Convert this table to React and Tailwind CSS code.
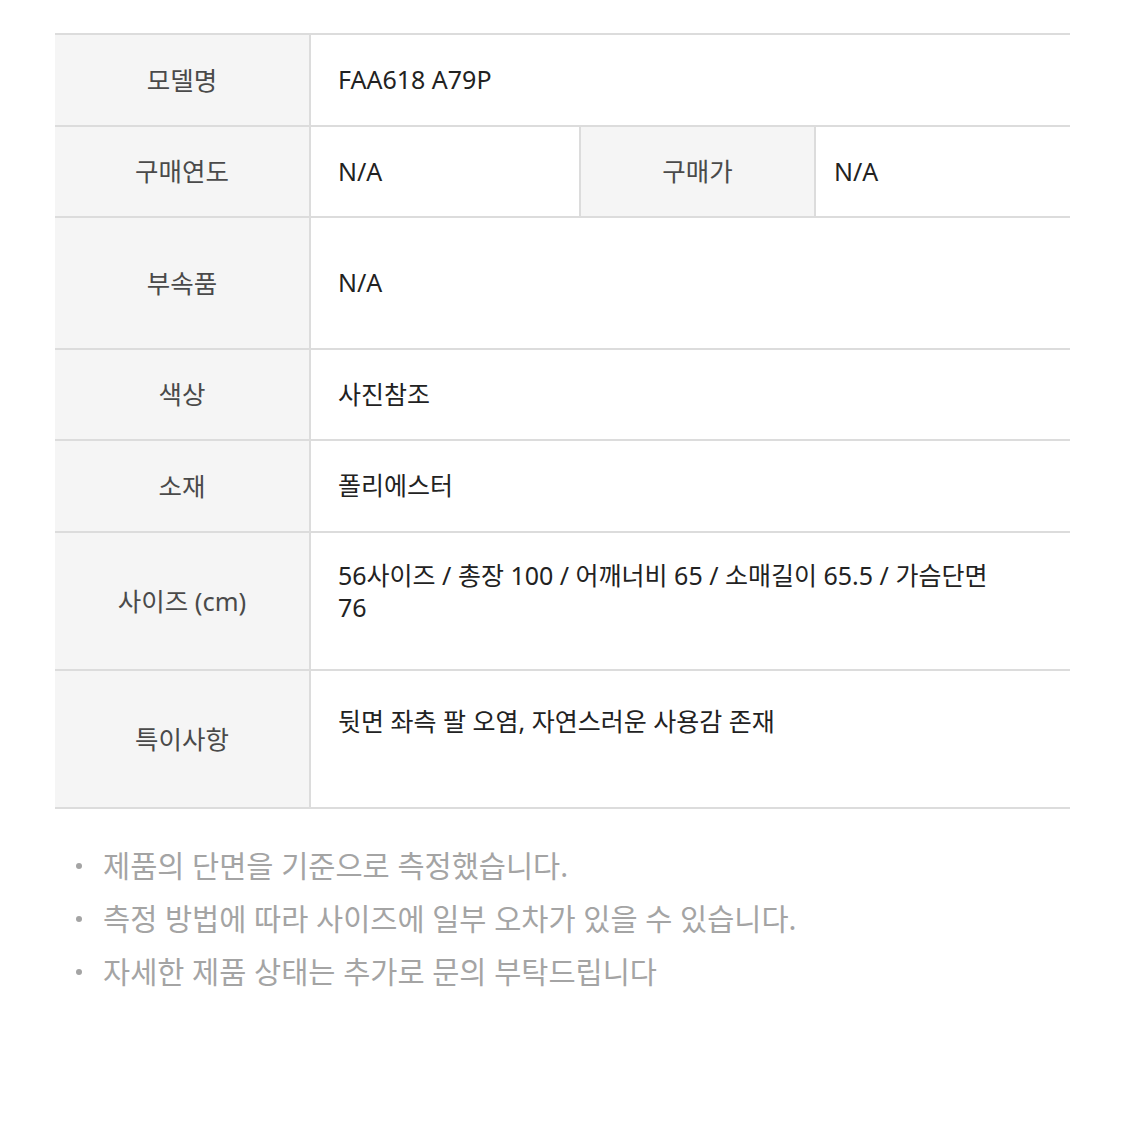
const rows = [
  { label: "모델명", h: "h-[92px]", value: "FAA618 A79P" },
  { label: "구매연도", h: "h-[91px]", split: true },
  { label: "부속품", h: "h-[132px]", value: "N/A" },
  { label: "색상", h: "h-[91px]", value: "사진참조" },
  { label: "소재", h: "h-[92px]", value: "폴리에스터" },
  {
    label: "사이즈 (cm)",
    h: "h-[138px]",
    top: "pt-[26px]",
    value: (
      <>
        56사이즈 / 총장 100 / 어깨너비 65 / 소매길이 65.5 / 가슴단면
        <br />
        76
      </>
    ),
  },
  {
    label: "특이사항",
    h: "h-[138px]",
    top: "pt-[34px]",
    value: "뒷면 좌측 팔 오염, 자연스러운 사용감 존재",
  },
];

const notes = [
  "제품의 단면을 기준으로 측정했습니다.",
  "측정 방법에 따라 사이즈에 일부 오차가 있을 수 있습니다.",
  "자세한 제품 상태는 추가로 문의 부탁드립니다",
];

function Label({ children, className = "" }) {
  return (
    <div
      className={`flex items-center justify-center bg-[#f5f5f5] text-[25.5px] text-[#4a4a4a] ${className}`}
    >
      {children}
    </div>
  );
}

export default function App() {
  return (
    <div
      className="min-h-[1125px] bg-white pt-[33px]"
      style={{ fontFamily: '"Noto Sans", "Noto Sans CJK KR", sans-serif' }}
    >
      <div className="mx-[55px] w-[1015px] border-t-2 border-[#dcdcdc]">
        {rows.map((r) => (
          <div key={r.label} className={`flex border-b-2 border-[#dcdcdc] ${r.h}`}>
            <Label className="w-[256px] border-r-2 border-[#dcdcdc]">{r.label}</Label>
            {r.split ? (
              <div className="flex flex-1">
                <div className="flex w-[270px] items-center border-r-2 border-[#dcdcdc] pl-[27px] text-[25px] text-[#222]">
                  N/A
                </div>
                <Label className="w-[235px] border-r-2 border-[#dcdcdc]">구매가</Label>
                <div className="flex flex-1 items-center pl-[18px] text-[25px] text-[#222]">
                  N/A
                </div>
              </div>
            ) : r.top ? (
              <div className={`flex-1 pl-[27px] text-[25px] leading-[32px] text-[#222] ${r.top}`}>
                {r.value}
              </div>
            ) : (
              <div className="flex flex-1 items-center pl-[27px] text-[25px] text-[#222]">
                {r.value}
              </div>
            )}
          </div>
        ))}
      </div>
      <ul className="ml-[76px] mt-[38px] space-y-[15px]">
        {notes.map((n) => (
          <li key={n} className="flex items-center text-[29.5px] leading-[38px] text-[#a4a4a4]">
            <span className="mr-[21px] inline-block h-[6px] w-[6px] rounded-full bg-[#a4a4a4]" />
            {n}
          </li>
        ))}
      </ul>
    </div>
  );
}
